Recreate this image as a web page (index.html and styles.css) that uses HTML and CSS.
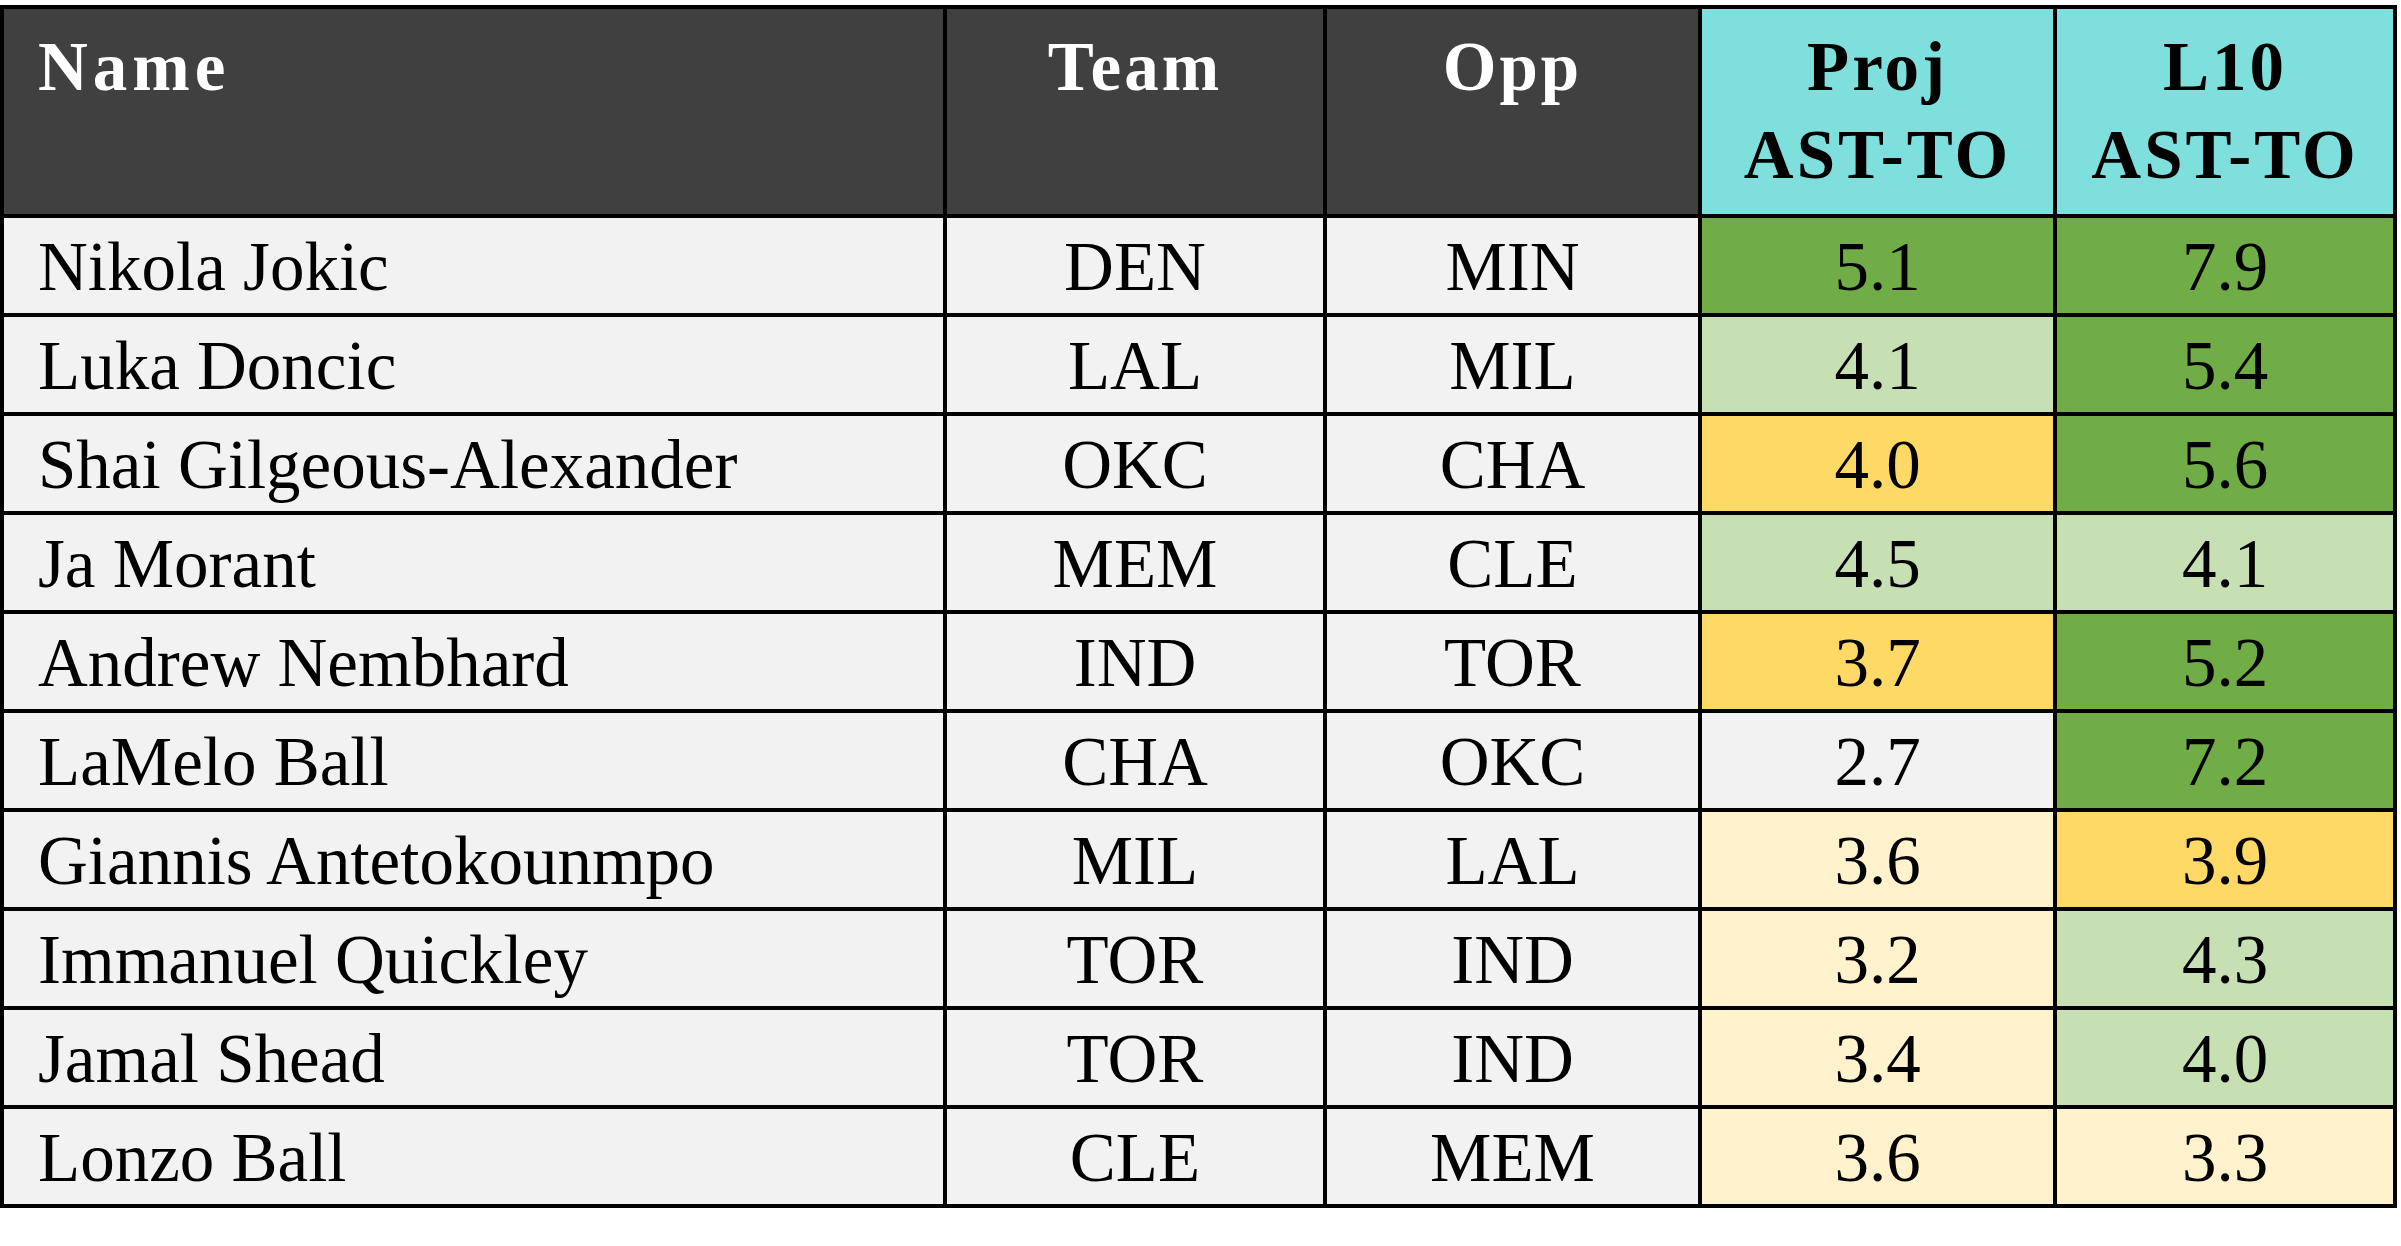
FILE: index.html
```html
<!DOCTYPE html>
<html lang="en">
<head>
<meta charset="utf-8">
<title>AST-TO Projections</title>
<link rel="stylesheet" href="styles.css">
</head>
<body>
<div class="sheet">
  <div class="hd dark left">Name</div>
  <div class="hd dark">Team</div>
  <div class="hd dark">Opp</div>
  <div class="hd cyan">Proj<br>AST-TO</div>
  <div class="hd cyan">L10<br>AST-TO</div>

  <div class="c left">Nikola Jokic</div><div class="c">DEN</div><div class="c">MIN</div><div class="c g2">5.1</div><div class="c g2">7.9</div>
  <div class="c left">Luka Doncic</div><div class="c">LAL</div><div class="c">MIL</div><div class="c g1">4.1</div><div class="c g2">5.4</div>
  <div class="c left">Shai Gilgeous-Alexander</div><div class="c">OKC</div><div class="c">CHA</div><div class="c y2">4.0</div><div class="c g2">5.6</div>
  <div class="c left">Ja Morant</div><div class="c">MEM</div><div class="c">CLE</div><div class="c g1">4.5</div><div class="c g1">4.1</div>
  <div class="c left">Andrew Nembhard</div><div class="c">IND</div><div class="c">TOR</div><div class="c y2">3.7</div><div class="c g2">5.2</div>
  <div class="c left">LaMelo Ball</div><div class="c">CHA</div><div class="c">OKC</div><div class="c">2.7</div><div class="c g2">7.2</div>
  <div class="c left">Giannis Antetokounmpo</div><div class="c">MIL</div><div class="c">LAL</div><div class="c y1">3.6</div><div class="c y2">3.9</div>
  <div class="c left">Immanuel Quickley</div><div class="c">TOR</div><div class="c">IND</div><div class="c y1">3.2</div><div class="c g1">4.3</div>
  <div class="c left">Jamal Shead</div><div class="c">TOR</div><div class="c">IND</div><div class="c y1">3.4</div><div class="c g1">4.0</div>
  <div class="c left">Lonzo Ball</div><div class="c">CLE</div><div class="c">MEM</div><div class="c y1">3.6</div><div class="c y1">3.3</div>
</div>
</body>
</html>
```

FILE: styles.css
```css
html, body {
  margin: 0;
  padding: 0;
  background: #ffffff;
}

body {
  padding-top: 5px;
  font-family: "Liberation Serif", "Times New Roman", serif;
}

.sheet {
  display: grid;
  grid-template-columns: 939px 376px 371px 351px 336px;
  grid-template-rows: 205px repeat(10, 95px);
  gap: 4px;
  padding: 4px;
  background: #000000;
  width: max-content;
}

.hd {
  font-size: 69px;
  font-weight: bold;
  letter-spacing: 3px;
  line-height: 88px;
  padding-top: 14px;
  text-align: center;
  box-sizing: border-box;
}

.dark {
  background: #404040;
  color: #ffffff;
}

.dark.left {
  letter-spacing: 5px;
}

.cyan {
  background: #7fdfdd;
  color: #000000;
}

.c {
  background: #f2f2f2;
  color: #000000;
  font-size: 69px;
  line-height: 92px;
  padding-top: 3px;
  text-align: center;
  white-space: nowrap;
  box-sizing: border-box;
}

.left {
  text-align: left;
  padding-left: 34px;
}

.g2 { background: #70ad47; }
.g1 { background: #c6e0b4; }
.y2 { background: #ffd966; }
.y1 { background: #fff2cc; }
```
